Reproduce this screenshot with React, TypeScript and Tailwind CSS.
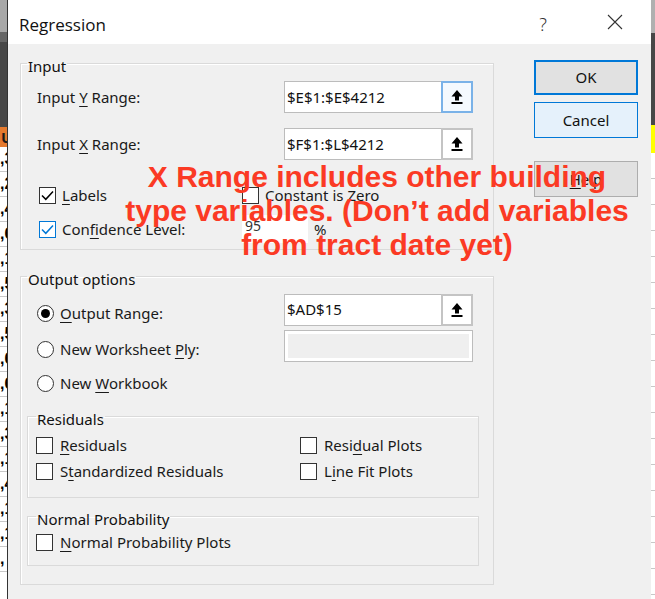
import React from "react";

const UploadIcon = () => (
  <svg width="12" height="16" viewBox="0 0 12 16">
    <path d="M6 1 L11.5 7.5 H8 V11.5 H4 V7.5 H0.5 Z" fill="#000" />
    <rect x="0.5" y="13" width="11" height="2" fill="#000" />
  </svg>
);

function Check({ checked = false, focus = false }: { checked?: boolean; focus?: boolean }) {
  return (
    <div
      className={
        "w-[17px] h-[17px] bg-white border flex items-center justify-center shrink-0 " +
        (focus ? "border-[#0078d7]" : "border-[#333]")
      }
    >
      {checked && (
        <svg width="13" height="11" viewBox="0 0 13 11">
          <path
            d="M1 5.5 L4.8 9.3 L12 1.5"
            fill="none"
            stroke={focus ? "#0078d7" : "#000"}
            strokeWidth="1.5"
          />
        </svg>
      )}
    </div>
  );
}

function Radio({ on = false }: { on?: boolean }) {
  return (
    <div className="w-[17px] h-[17px] rounded-full bg-white border border-[#333] flex items-center justify-center shrink-0">
      {on && <div className="w-[9px] h-[9px] rounded-full bg-[#000]" />}
    </div>
  );
}

function RangeBox({ value, blue = false }: { value: string; blue?: boolean }) {
  return (
    <div className="w-[189px] h-[32px] flex bg-white border border-[#bcbcbc]">
      <div className="flex-1 flex items-center pl-[2px] text-[15px] text-[#111]">{value}</div>
      <div
        className={
          "w-[32px] -my-[1px] -mr-[1px] flex items-center justify-center border-2 " +
          (blue ? "border-[#7ab2e8] bg-[#f4f9fe]" : "border-[#c4c4c4] bg-white")
        }
      >
        <UploadIcon />
      </div>
    </div>
  );
}

const U = ({ c }: { c: string }) => <span className="underline underline-offset-[3px]">{c}</span>;

const leftCells = [",3", ",2", ",4", ",6", ",1", ",5", ",3", ",5", ",6", ",6", ",1", ",3", ",1", ",4", ",1", ",1", ","];

function App() {
  return (
    <div className="relative w-[655px] h-[599px] overflow-hidden flex bg-white font-['Noto_Sans',sans-serif] text-[#1a1a1a]">
      {/* spreadsheet behind, left */}
      <div className="w-[8px] flex flex-col border-r border-[#333]">
        <div className="h-[32px] bg-[#a8a8a8]" />
        <div className="h-[10px] bg-[#666]" />
        <div className="h-[85px] bg-[#474747]" />
        <div className="h-[20px] bg-[#e57a2e] flex items-center overflow-hidden text-[15px] font-bold leading-none pl-[1px]">
          U
        </div>
        {leftCells.map((c, i) => (
          <div
            key={i}
            className="h-[25px] shrink-0 border-b border-[#c8c8c8] flex items-center overflow-hidden font-['Liberation_Sans',sans-serif] text-[16px] font-bold text-black leading-none whitespace-nowrap"
          >
            {c}
          </div>
        ))}
      </div>

      {/* dialog */}
      <div className="w-[643px] flex flex-col">
        <div className="h-[44px] bg-white flex items-center shrink-0 pt-[5px]">
          <span className="ml-[11px] text-[17px] text-[#111] font-['Open_Sans',sans-serif]">Regression</span>
          <span className="ml-auto mr-[60px] text-[18px] text-[#333] font-light">?</span>
          <svg className="mr-[28px] -mt-[5px]" width="16" height="16" viewBox="0 0 16 16">
            <path d="M1 1 L15 15 M15 1 L1 15" stroke="#333" strokeWidth="1.1" />
          </svg>
        </div>

        <div className="flex-1 bg-[#f0f0f0] flex pl-[12px] text-[15px]">
          <div className="w-[474px] flex flex-col">
            {/* Input */}
            <fieldset className="mt-[6px] border border-[#dadada] shadow-[inset_1px_1px_0_#fff]">
              <legend className="ml-[6px] px-[1px] pt-[6px] leading-[20px] text-[#111]">Input</legend>
              <div className="pl-[16px] flex flex-col">
                <div className="mt-[5px] h-[32px] flex items-center">
                  <div className="w-[247px]">
                    Input <U c="Y" /> Range:
                  </div>
                  <RangeBox value="$E$1:$E$4212" blue />
                </div>
                <div className="mt-[15px] h-[32px] flex items-center">
                  <div className="w-[247px]">
                    Input <U c="X" /> Range:
                  </div>
                  <RangeBox value="$F$1:$L$4212" />
                </div>
                <div className="mt-[26px] h-[18px] flex items-center pl-[2px]">
                  <Check checked />
                  <span className="ml-[6px] w-[180px]">
                    <U c="L" />
                    abels
                  </span>
                  <Check />
                  <span className="ml-[6px]">Constant is Zero</span>
                </div>
                <div className="mt-[10px] h-[30px] flex items-center pl-[2px]">
                  <Check checked focus />
                  <span className="ml-[6px] w-[180px]">
                    Con<U c="f" />idence Level:
                  </span>
                  <div className="w-[66px] h-[28px] bg-white pl-[3px] text-[14px] text-[#333] leading-[22px]">95</div>
                  <span className="ml-[6px]">%</span>
                </div>
                <div className="h-[5px]" />
              </div>
            </fieldset>

            {/* Output options */}
            <fieldset className="mt-[13px] border border-[#dadada] shadow-[inset_1px_1px_0_#fff]">
              <legend className="ml-[6px] px-[1px] pt-[6px] leading-[20px] text-[#111]">Output options</legend>
              <div className="flex flex-col">
                <div className="pl-[16px] mt-[4px] h-[33px] flex items-center">
                  <div className="w-[247px] flex items-center mt-[7px]">
                    <Radio on />
                    <span className="ml-[6px]">
                      <U c="O" />
                      utput Range:
                    </span>
                  </div>
                  <RangeBox value="$AD$15" />
                </div>
                <div className="pl-[16px] mt-[4px] h-[32px] flex items-center">
                  <div className="w-[247px] flex items-center mt-[6px]">
                    <Radio />
                    <span className="ml-[6px]">
                      New Worksheet <U c="P" />
                      ly:
                    </span>
                  </div>
                  <div className="w-[189px] h-[32px] border border-[#bcbcbc] bg-white p-[3px]">
                    <div className="w-full h-full bg-[#efefef]" />
                  </div>
                </div>
                <div className="pl-[16px] mt-[11px] h-[20px] flex items-center">
                  <Radio />
                  <span className="ml-[6px]">
                    New <U c="W" />
                    orkbook
                  </span>
                </div>

                {/* Residuals */}
                <fieldset className="mt-[10px] ml-[6px] w-[452px] border border-[#dadada] shadow-[inset_1px_1px_0_#fff]">
                  <legend className="ml-[8px] px-[1px] pt-[6px] leading-[20px] text-[#111]">Residuals</legend>
                  <div className="pl-[8px] flex flex-col">
                    <div className="mt-[7px] h-[18px] flex items-center">
                      <Check />
                      <span className="ml-[7px] w-[240px]">
                        <U c="R" />
                        esiduals
                      </span>
                      <Check />
                      <span className="ml-[7px]">
                        Resi<U c="d" />ual Plots
                      </span>
                    </div>
                    <div className="mt-[8px] h-[18px] flex items-center">
                      <Check />
                      <span className="ml-[7px] w-[240px]">
                        S<U c="t" />andardized Residuals
                      </span>
                      <Check />
                      <span className="ml-[7px]">
                        L<U c="i" />ne Fit Plots
                      </span>
                    </div>
                    <div className="h-[17px]" />
                  </div>
                </fieldset>

                {/* Normal Probability */}
                <fieldset className="mt-[5px] ml-[6px] w-[452px] border border-[#dadada] shadow-[inset_1px_1px_0_#fff]">
                  <legend className="ml-[8px] px-[1px] pt-[6px] leading-[20px] text-[#111]">Normal Probability</legend>
                  <div className="pl-[8px] flex flex-col">
                    <div className="mt-[4px] h-[18px] flex items-center">
                      <Check />
                      <span className="ml-[7px]">
                        <U c="N" />
                        ormal Probability Plots
                      </span>
                    </div>
                    <div className="h-[14px]" />
                  </div>
                </fieldset>
                <div className="h-[18px]" />
              </div>
            </fieldset>
          </div>

          {/* buttons */}
          <div className="ml-[40px] w-[104px] flex flex-col pt-[16px]">
            <div className="h-[35px] bg-[#e1e1e1] border-2 border-[#0078d7] flex items-center justify-center text-[#111]">
              OK
            </div>
            <div className="mt-[7px] h-[36px] bg-[#e5f1fb] border border-[#0078d7] flex items-center justify-center text-[#111]">
              Cancel
            </div>
            <div className="mt-[23px] h-[36px] bg-[#e1e1e1] border border-[#adadad] flex items-center justify-center text-[#111]">
              <span>
                <U c="H" />
                elp
              </span>
            </div>
          </div>
        </div>
      </div>

      {/* spreadsheet behind, right */}
      <div className="w-[4px] flex flex-col">
        <div className="h-[33px] bg-[#b0b0b0]" />
        <div className="h-[92px] bg-[#474747]" />
        <div className="h-[28px] bg-[#ffff00]" />
        {Array.from({ length: 17 }, (_, i) => (
          <div key={i} className="h-[26px] shrink-0 border-b border-[#c8c8c8] bg-white" />
        ))}
      </div>

      {/* annotation */}
      <div className="absolute left-0 top-[160px] w-[754px] text-center font-['Liberation_Sans',Arial,sans-serif] font-bold text-[30px] leading-[34px] text-[#fb3a24]">
        X Range includes other building
        <br />
        type variables. (Don’t add variables
        <br />
        from tract date yet)
      </div>
    </div>
  );
}

export default App;
